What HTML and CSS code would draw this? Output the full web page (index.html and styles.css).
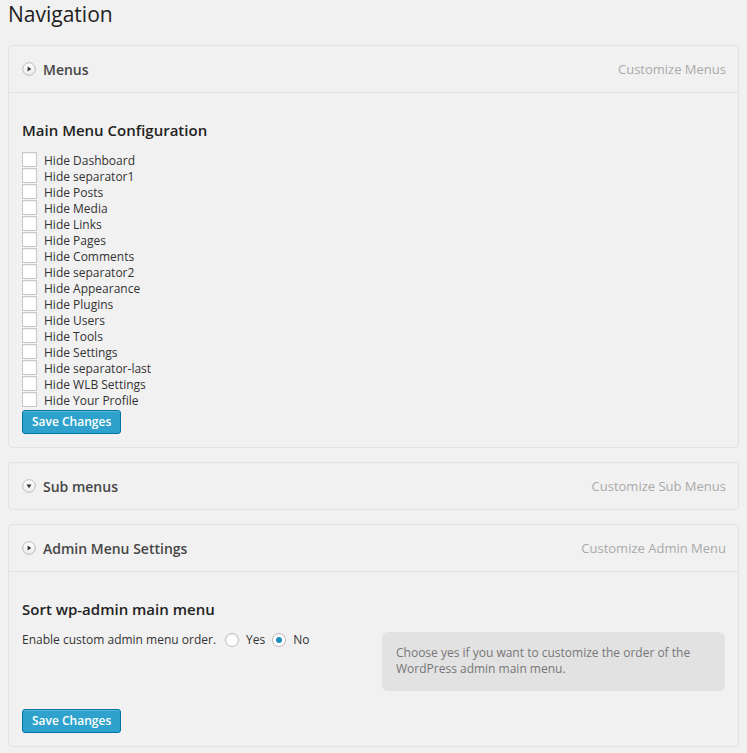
FILE: index.html
```html
<!DOCTYPE html>
<html>
<head>
<meta charset="utf-8">
<title>Navigation</title>
<link rel="stylesheet" href="styles.css">
</head>
<body>
<h1 class="page-title">Navigation</h1>

<div class="panel">
  <div class="panel-header">
    <span class="toggle">
      <svg width="14" height="14" viewBox="0 0 14 14"><defs><linearGradient id="g1" x1="0" y1="0" x2="0" y2="1"><stop offset="0" stop-color="#ffffff"/><stop offset="1" stop-color="#ececec"/></linearGradient></defs><circle cx="7" cy="7" r="6.3" fill="url(#g1)" stroke="#b9b9b9"/><path d="M5.6 4.5 L9.3 7 L5.6 9.5 Z" fill="#333"/></svg>
    </span>
    <span class="panel-title">Menus</span>
    <span class="panel-link">Customize Menus</span>
  </div>
  <div class="panel-body">
    <h3 class="section-title">Main Menu Configuration</h3>
    <ul class="check-list">
      <li><label><input type="checkbox"><span>Hide Dashboard</span></label></li>
      <li><label><input type="checkbox"><span>Hide separator1</span></label></li>
      <li><label><input type="checkbox"><span>Hide Posts</span></label></li>
      <li><label><input type="checkbox"><span>Hide Media</span></label></li>
      <li><label><input type="checkbox"><span>Hide Links</span></label></li>
      <li><label><input type="checkbox"><span>Hide Pages</span></label></li>
      <li><label><input type="checkbox"><span>Hide Comments</span></label></li>
      <li><label><input type="checkbox"><span>Hide separator2</span></label></li>
      <li><label><input type="checkbox"><span>Hide Appearance</span></label></li>
      <li><label><input type="checkbox"><span>Hide Plugins</span></label></li>
      <li><label><input type="checkbox"><span>Hide Users</span></label></li>
      <li><label><input type="checkbox"><span>Hide Tools</span></label></li>
      <li><label><input type="checkbox"><span>Hide Settings</span></label></li>
      <li><label><input type="checkbox"><span>Hide separator-last</span></label></li>
      <li><label><input type="checkbox"><span>Hide WLB Settings</span></label></li>
      <li><label><input type="checkbox"><span>Hide Your Profile</span></label></li>
    </ul>
    <button class="btn-primary btn-first">Save Changes</button>
  </div>
</div>

<div class="panel">
  <div class="panel-header collapsed">
    <span class="toggle">
      <svg width="14" height="14" viewBox="0 0 14 14"><defs><linearGradient id="g2" x1="0" y1="0" x2="0" y2="1"><stop offset="0" stop-color="#ffffff"/><stop offset="1" stop-color="#ececec"/></linearGradient></defs><circle cx="7" cy="7" r="6.3" fill="url(#g2)" stroke="#b9b9b9"/><path d="M4.5 5.6 L9.5 5.6 L7 9.3 Z" fill="#333"/></svg>
    </span>
    <span class="panel-title">Sub menus</span>
    <span class="panel-link">Customize Sub Menus</span>
  </div>
</div>

<div class="panel">
  <div class="panel-header">
    <span class="toggle">
      <svg width="14" height="14" viewBox="0 0 14 14"><defs><linearGradient id="g3" x1="0" y1="0" x2="0" y2="1"><stop offset="0" stop-color="#ffffff"/><stop offset="1" stop-color="#ececec"/></linearGradient></defs><circle cx="7" cy="7" r="6.3" fill="url(#g3)" stroke="#b9b9b9"/><path d="M5.6 4.5 L9.3 7 L5.6 9.5 Z" fill="#333"/></svg>
    </span>
    <span class="panel-title">Admin Menu Settings</span>
    <span class="panel-link">Customize Admin Menu</span>
  </div>
  <div class="panel-body">
    <h3 class="section-title">Sort wp-admin main menu</h3>
    <div class="option-row">
      <div class="option-field">
        <span class="option-label">Enable custom admin menu order.</span>
        <label class="radio"><input type="radio" name="order"><span>Yes</span></label>
        <label class="radio"><input type="radio" name="order" checked><span>No</span></label>
      </div>
      <div class="help-box">Choose yes if you want to customize the order of the WordPress admin main menu.</div>
    </div>
    <button class="btn-primary btn-second">Save Changes</button>
  </div>
</div>
</body>
</html>
```
FILE: styles.css
```css
* { box-sizing: border-box; }

body {
  margin: 0;
  padding: 0 8px;
  background: #f1f1f1;
  font-family: "Open Sans", "Liberation Sans", sans-serif;
  font-size: 12px;
  color: #333;
}

.page-title {
  margin: 0 0 16px;
  font-size: 21px;
  line-height: 29px;
  font-weight: 400;
  color: #222;
}

.panel {
  border: 1px solid #e2e2e2;
  border-radius: 4px;
  background: #f1f1f1;
  margin-bottom: 14px;
}

.panel-header {
  display: flex;
  align-items: center;
  height: 47px;
  padding: 0 12px 0 13px;
  border-bottom: 1px solid #e2e2e2;
}

.panel-header.collapsed {
  border-bottom: none;
  height: 46px;
}

.toggle {
  display: flex;
  width: 14px;
  height: 14px;
  margin-right: 7px;
}

.panel-title {
  font-size: 14px;
  font-weight: 600;
  color: #464646;
}

.panel-link {
  margin-left: auto;
  color: #aaa;
  font-size: 13px;
}

.panel-body {
  padding: 27px 13px 13px;
}

.section-title {
  margin: 0 0 12px;
  font-size: 15px;
  line-height: 20px;
  font-weight: 600;
  color: #222;
}

.check-list {
  list-style: none;
  margin: 0;
  padding: 0;
}

.check-list li {
  height: 16px;
}

.check-list label {
  display: flex;
  align-items: flex-start;
  line-height: 16px;
}

.check-list label span {
  padding-top: 1px;
}

.check-list input {
  appearance: none;
  -webkit-appearance: none;
  width: 15px;
  height: 15px;
  margin: 0 7px 0 0;
  border: 1px solid #c8c8c8;
  background: #fff;
  box-shadow: inset 0 1px 2px rgba(0,0,0,.07);
}

.btn-primary {
  display: block;
  height: 24px;
  padding: 0 9px;
  border: 1px solid #0074a2;
  border-radius: 3px;
  background: #2ea2cc;
  box-shadow: inset 0 1px 0 rgba(120,200,230,.5);
  color: #fff;
  font-family: "Open Sans", "Liberation Sans", sans-serif;
  font-size: 12px;
  font-weight: 600;
  line-height: 22px;
}

.btn-first { margin-top: 2px; }
.btn-second { margin-top: 18px; }

.option-row {
  display: flex;
  align-items: flex-start;
}

.option-field {
  display: flex;
  align-items: center;
  height: 18px;
  line-height: 18px;
}

.option-label { margin-right: 9px; }

.radio {
  display: flex;
  align-items: center;
  margin-right: 7px;
}

.radio input {
  appearance: none;
  -webkit-appearance: none;
  width: 14px;
  height: 14px;
  margin: 0 7px 0 0;
  border: 1px solid #bbb;
  border-radius: 50%;
  background: #fff;
  box-shadow: inset 0 1px 2px rgba(0,0,0,.07);
  position: relative;
}

.radio input:checked::after {
  content: "";
  position: absolute;
  left: 3px;
  top: 3px;
  width: 6px;
  height: 6px;
  border-radius: 50%;
  background: #1e8cbe;
}

.help-box {
  margin-left: auto;
  margin-top: 1px;
  width: 343px;
  padding: 13px 14px 14px;
  border-radius: 6px;
  background: #e2e2e2;
  color: #777;
  font-size: 12px;
  line-height: 16px;
}
```
